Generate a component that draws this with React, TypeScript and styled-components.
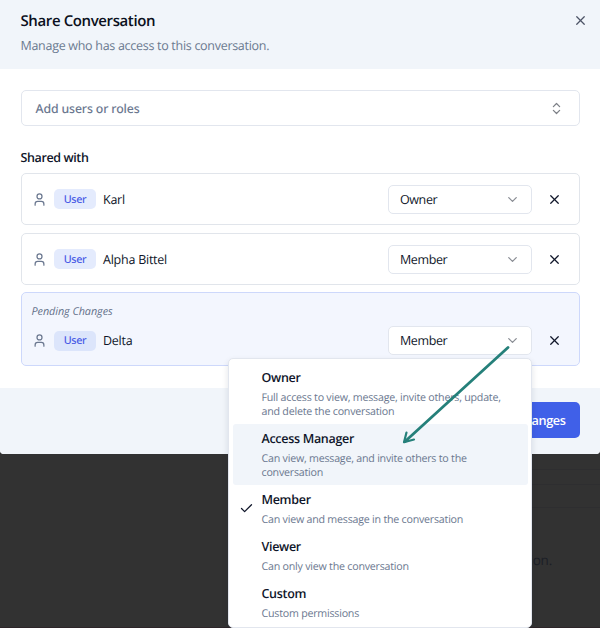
import React from 'react';
import styled, { createGlobalStyle, css } from 'styled-components';
import { Check, ChevronDown, ChevronsUpDown, User, X } from 'lucide-react';

const GlobalStyle = createGlobalStyle`
  *, *::before, *::after { box-sizing: border-box; }
  body {
    margin: 0;
    background: #323232;
    font-family: 'Open Sans', 'Noto Sans', sans-serif;
    font-size: 12.5px;
    color: #10162a;
    text-rendering: geometricPrecision;
  }
`;

const Screen = styled.main`
  position: relative;
  width: 600px;
  height: 628px;
  overflow: hidden;
  display: flex;
  flex-direction: column;
`;

const Dialog = styled.section`
  flex: none;
  height: 454px;
  display: flex;
  flex-direction: column;
  background: #fff;
  border-radius: 0 0 4px 4px;
  overflow: hidden;
`;

const Header = styled.header`
  height: 69px;
  padding: 11px 13px 0 20.5px;
  display: flex;
  justify-content: space-between;
  background: #f1f5fa;
`;

const Title = styled.h1`
  margin: 0;
  font-size: 15px;
  line-height: 21px;
  font-weight: 600;
  letter-spacing: -0.39px;
  color: #0b1020;
`;

const Subtitle = styled.p`
  margin: 4px 0 0;
  line-height: 19px;
  letter-spacing: -0.29px;
  color: #6b7a90;
`;

const IconButton = styled.button<{ $muted?: boolean }>`
  width: 14px;
  height: 19px;
  padding: 0;
  border: 0;
  background: none;
  display: grid;
  place-items: center;
  color: ${(p) => (p.$muted ? '#4d5466' : '#10162a')};
`;

const Body = styled.div`
  flex: 1;
  padding: 21px 20.5px 0;
`;

const field = css`
  display: flex;
  align-items: center;
  justify-content: space-between;
  background: #fff;
  border: 1px solid #e2e6ee;
  border-radius: 5px;
`;

const Combobox = styled.div`
  ${field}
  height: 36px;
  padding: 0 15px 0 14px;
  font-family: 'Noto Sans', sans-serif;
  font-size: 12.3px;
  font-weight: 500;
  letter-spacing: -0.13px;
  color: #6b7890;
`;

const SectionTitle = styled.h2`
  margin: 23px 0 6px;
  font-size: 12.5px;
  line-height: 18px;
  font-weight: 600;
  letter-spacing: -0.39px;
`;

const List = styled.div`
  display: flex;
  flex-direction: column;
`;

const Entry = styled.article<{ $pending?: boolean }>`
  height: ${(p) => (p.$pending ? 74 : 52)}px;
  margin-bottom: 8px;
  padding: 0 18px 0 10px;
  display: flex;
  flex-direction: column;
  justify-content: center;
  border: 1px solid ${(p) => (p.$pending ? '#cdd8fb' : '#e1e5eb')};
  border-radius: 5px;
  background: ${(p) => (p.$pending ? '#f3f6fe' : '#fff')};
  ${(p) => p.$pending && 'margin-top: -1px;'}
`;

const PendingNote = styled.em`
  margin-top: 2px;
  height: 14px;
  line-height: 14px;
  font-size: 10.8px;
  letter-spacing: -0.05px;
  color: #64718a;
`;

const EntryRow = styled.div<{ $pending?: boolean }>`
  display: flex;
  align-items: center;
  height: 29px;
  ${(p) => p.$pending && 'margin-top: 7px;'}
`;

const PersonIcon = styled(User)`
  flex: none;
  margin-right: 7.5px;
  color: #6b7890;
`;

const Badge = styled.span<{ $pending?: boolean }>`
  width: 42px;
  height: 20px;
  margin-right: 7px;
  display: grid;
  place-items: center;
  border-radius: 5px;
  background: ${(p) => (p.$pending ? '#dce5fb' : '#e4ebfd')};
  font-family: 'Noto Sans', sans-serif;
  font-size: 10.8px;
  font-weight: 500;
  letter-spacing: -0.4px;
  color: #4a5be6;
`;

const Name = styled.span`
  flex: 1;
  letter-spacing: -0.24px;
`;

const Select = styled.div`
  ${field}
  width: 144px;
  height: 29px;
  margin-right: 15px;
  padding: 0 11px 0 11.5px;
  letter-spacing: -0.4px;
  svg { color: #8a8d94; }
`;

const Footer = styled.footer`
  height: 66px;
  padding: 0 20.5px;
  display: flex;
  align-items: center;
  justify-content: flex-end;
  background: #f1f5fa;
`;

const SaveButton = styled.button`
  height: 36px;
  margin-bottom: 2px;
  padding: 0 14px;
  border: 0;
  border-radius: 5px;
  background: #4060e8;
  color: #fff;
  font: 600 12.7px 'Open Sans', sans-serif;
  letter-spacing: -0.4px;
`;

const Backdrop = styled.div`
  flex: 1;
  display: flex;
  flex-direction: column;
  align-items: flex-end;
  border-bottom: 1px solid #2d2529;
`;

const Rule = styled.div<{ $gap: number }>`
  width: 100px;
  margin-top: ${(p) => p.$gap}px;
  border-top: 1px solid #2e2e30;
`;

const BackdropText = styled.p`
  margin: 42px 48px 0 0;
  line-height: 20px;
  letter-spacing: -0.2px;
  font-size: 13.5px;
  color: #1b1e26;
`;

const Menu = styled.div`
  position: absolute;
  left: 228px;
  top: 358px;
  width: 304px;
  height: 270px;
  padding: 4px 3px 0 4px;
  background: #fff;
  border: 1px solid #e2e6ee;
  border-radius: 5px;
  box-shadow: 0 3px 6px rgba(20, 30, 60, 0.12);
`;

const Option = styled.div<{ $active?: boolean }>`
  display: grid;
  grid-template-columns: 28.5px 1fr;
  align-items: center;
  padding: 5px 8px 5px 0;
  border-radius: 3px;
  background: ${(p) => (p.$active ? '#f1f5fa' : 'transparent')};
`;

const Tick = styled.span`
  display: grid;
  padding-left: 6px;
`;

const OptionTitle = styled.div`
  line-height: 19px;
  font-weight: 600;
  letter-spacing: -0.3px;
`;

const OptionText = styled.div`
  margin-top: 4px;
  font-size: 10.7px;
  line-height: 14px;
  letter-spacing: -0.235px;
  white-space: pre-line;
  color: #6b7890;
`;

const Arrow = styled.svg`
  position: absolute;
  left: 395px;
  top: 340px;
`;

const people = [
  { name: 'Karl', role: 'Owner' },
  { name: 'Alpha Bittel', role: 'Member' },
  { name: 'Delta', role: 'Member', pending: true },
];

const roles = [
  { name: 'Owner', text: 'Full access to view, message, invite others, update,\nand delete the conversation' },
  { name: 'Access Manager', text: 'Can view, message, and invite others to the\nconversation', active: true },
  { name: 'Member', text: 'Can view and message in the conversation', checked: true },
  { name: 'Viewer', text: 'Can only view the conversation' },
  { name: 'Custom', text: 'Custom permissions' },
];

export default function App() {
  return (
    <Screen>
      <GlobalStyle />
      <Dialog>
        <Header>
          <div>
            <Title>Share Conversation</Title>
            <Subtitle>Manage who has access to this conversation.</Subtitle>
          </div>
          <IconButton $muted aria-label="Close"><X size={15} strokeWidth={2} /></IconButton>
        </Header>
        <Body>
          <Combobox>
            Add users or roles
            <ChevronsUpDown size={15} strokeWidth={2} color="#7d8087" />
          </Combobox>
          <SectionTitle>Shared with</SectionTitle>
          <List>
            {people.map((p) => (
              <Entry key={p.name} $pending={p.pending}>
                {p.pending && <PendingNote>Pending Changes</PendingNote>}
                <EntryRow $pending={p.pending}>
                  <PersonIcon size={15} strokeWidth={2} />
                  <Badge $pending={p.pending}>User</Badge>
                  <Name>{p.name}</Name>
                  <Select>{p.role}<ChevronDown size={15} strokeWidth={2} /></Select>
                  <IconButton aria-label={`Remove ${p.name}`}><X size={15} strokeWidth={2} /></IconButton>
                </EntryRow>
              </Entry>
            ))}
          </List>
        </Body>
        <Footer><SaveButton>Save Changes</SaveButton></Footer>
      </Dialog>
      <Backdrop>
        <Rule $gap={15} />
        <Rule $gap={14} />
        <Rule $gap={22} />
        <BackdropText>conversation.</BackdropText>
      </Backdrop>
      <Menu>
        {roles.map((r) => (
          <Option key={r.name} $active={r.active}>
            <Tick>{r.checked && <Check size={15} strokeWidth={2} />}</Tick>
            <div>
              <OptionTitle>{r.name}</OptionTitle>
              <OptionText>{r.text}</OptionText>
            </div>
          </Option>
        ))}
      </Menu>
      <Arrow width="120" height="110" fill="none" stroke="#25807a" strokeWidth="2.8" strokeLinecap="round">
        <path d="M113 7.5 10 101.5" />
        <path d="M11.5 92.5 9 102.3 19 99.5" strokeWidth="2.2" strokeLinejoin="round" />
      </Arrow>
    </Screen>
  );
}
